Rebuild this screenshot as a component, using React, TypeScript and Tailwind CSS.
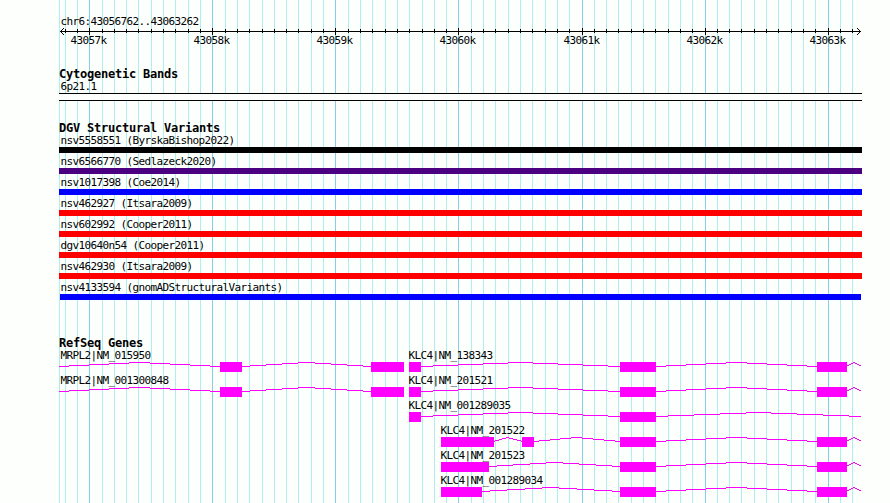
import React from 'react';

interface Variant {
  label: string;
  color: string;
  inset?: boolean;
}

interface Transcript {
  exons: [number, number][];
  start?: number; // intron running in from the left edge
  end?: number; // intron running out past the right edge
}

interface GeneRow {
  labels: { text: string; className: string }[];
  transcripts: Transcript[];
}

const MAJOR_LINES = [89, 212, 335, 458, 582, 705, 828];

const MINOR_LINES = [
  59, 65, 77, 102, 114, 126, 138, 151, 163, 175, 188, 200, 225, 237, 249, 262, 274, 286, 298, 311,
  323, 348, 360, 372, 385, 397, 409, 422, 434, 446, 471, 483, 495, 508, 520, 532, 545, 557, 569,
  594, 606, 618, 631, 643, 655, 668, 680, 692, 717, 729, 741, 754, 766, 778, 791, 803, 815, 840, 852,
];

const TICKS = [
  { text: '43057k', className: 'w-[123px]' },
  { text: '43058k', className: 'w-[123px]' },
  { text: '43059k', className: 'w-[123px]' },
  { text: '43060k', className: 'w-[124px]' },
  { text: '43061k', className: 'w-[123px]' },
  { text: '43062k', className: 'w-[123px]' },
  { text: '43063k', className: 'w-9' },
];

const VARIANTS: Variant[] = [
  { label: 'nsv5558551 (ByrskaBishop2022)', color: 'bg-black' },
  { label: 'nsv6566770 (Sedlazeck2020)', color: 'bg-[#4b0082]' },
  { label: 'nsv1017398 (Coe2014)', color: 'bg-[#0000ff]' },
  { label: 'nsv462927 (Itsara2009)', color: 'bg-[#ff0000]' },
  { label: 'nsv602992 (Cooper2011)', color: 'bg-[#ff0000]' },
  { label: 'dgv10640n54 (Cooper2011)', color: 'bg-[#ff0000]' },
  { label: 'nsv462930 (Itsara2009)', color: 'bg-[#ff0000]' },
  { label: 'nsv4133594 (gnomADStructuralVariants)', color: 'bg-[#0000ff]', inset: true },
];

const MRPL2: Transcript = { start: 59, exons: [[220, 242], [371, 404]] };

const GENES: GeneRow[] = [
  {
    labels: [
      { text: 'MRPL2|NM_015950', className: 'ml-[60px] w-[348px]' },
      { text: 'KLC4|NM_138343', className: '' },
    ],
    transcripts: [MRPL2, { exons: [[409, 421], [620, 656], [817, 847]], end: 861 }],
  },
  {
    labels: [
      { text: 'MRPL2|NM_001300848', className: 'ml-[60px] w-[348px]' },
      { text: 'KLC4|NM_201521', className: '' },
    ],
    transcripts: [MRPL2, { exons: [[409, 421], [620, 656], [817, 847]], end: 861 }],
  },
  {
    labels: [{ text: 'KLC4|NM_001289035', className: 'ml-[408px]' }],
    transcripts: [{ exons: [[409, 421], [620, 656]], end: 861 }],
  },
  {
    labels: [{ text: 'KLC4|NM_201522', className: 'ml-[440px]' }],
    transcripts: [{ exons: [[441, 494], [522, 534], [620, 656], [817, 847]], end: 861 }],
  },
  {
    labels: [{ text: 'KLC4|NM_201523', className: 'ml-[440px]' }],
    transcripts: [{ exons: [[441, 489], [620, 656], [817, 847]], end: 861 }],
  },
  {
    labels: [{ text: 'KLC4|NM_001289034', className: 'ml-[440px]' }],
    transcripts: [{ exons: [[441, 482], [620, 656], [817, 847]], end: 861 }],
  },
];

// Intron "hat": whole-pixel steps, four up to the middle and four back down
const hatPath = (from: number, to: number) => {
  const mid = Math.floor((from + to) / 2);
  let d = '';
  let runStart = from;
  let runY = 4;
  for (let x = from; x <= to; x++) {
    const t = x <= mid ? (x - from) / (mid - from) : (to - x) / (to - mid);
    const y = 4 - Math.round(t * 4);
    if (y !== runY) {
      d += `M${runStart} ${runY + 0.5}H${x}`;
      runStart = x;
      runY = y;
    }
  }
  return d + `M${runStart} ${runY + 0.5}H${to}`;
};

const intronPaths = ({ exons, start, end }: Transcript) => {
  const paths: string[] = [];
  if (start !== undefined) paths.push(hatPath(start, exons[0][0]));
  for (let i = 1; i < exons.length; i++) paths.push(hatPath(exons[i - 1][1] - 1, exons[i][0]));
  if (end !== undefined) paths.push(hatPath(exons[exons.length - 1][1] - 1, end));
  return paths;
};

const Label: React.FC<{ children: React.ReactNode }> = ({ children }) => (
  <span className="block w-max whitespace-pre pl-[0.5px] text-[11px] leading-[13px] tracking-[-0.6225px]">
    {children}
  </span>
);

const TrackTitle: React.FC<{ children: React.ReactNode }> = ({ children }) => (
  <h2 className="ml-[59px] h-3 whitespace-pre text-[12px] font-bold leading-[13px] tracking-[-0.224px]">
    {children}
  </h2>
);

const GridLines = () => (
  <svg className="absolute inset-0" width="890" height="503" shapeRendering="crispEdges">
    {MINOR_LINES.map((x) => (
      <rect key={x} x={x} y="0" width="1" height="503" fill="#afeeee" />
    ))}
    {MAJOR_LINES.map((x) => (
      <rect key={x} x={x} y="0" width="1" height="503" fill="#87ceeb" />
    ))}
  </svg>
);

const Ruler = () => (
  <svg className="block h-1.5 w-[890px] overflow-visible" shapeRendering="crispEdges">
    <rect x="60" y="3" width="801" height="1" />
    {MINOR_LINES.slice(1).map((x) => (
      <rect key={x} x={x} y="1" width="1" height="4" />
    ))}
    {MAJOR_LINES.map((x) => (
      <rect key={x} x={x} y="0" width="1" height="7" />
    ))}
    {[1, 2, 3].map((i) => (
      <g key={i}>
        <rect x={60 + i} y={3 - i} width="1" height="1" />
        <rect x={60 + i} y={3 + i} width="1" height="1" />
        <rect x={860 - i} y={3 - i} width="1" height="1" />
        <rect x={860 - i} y={3 + i} width="1" height="1" />
      </g>
    ))}
  </svg>
);

const App: React.FC = () => {
  return (
    <div className="relative h-[503px] w-[890px] overflow-hidden bg-[#fdfffd] font-['DejaVu_Sans_Mono',monospace] text-black">
      <GridLines />

      <main className="relative pt-[15px]">
        {/* Region and scale */}
        <section>
          <div className="ml-[60px] h-[13px]">
            <Label>chr6:43056762..43063262</Label>
          </div>
          <Ruler />
          <div className="ml-[70px] flex h-[13px]">
            {TICKS.map((tick) => (
              <div key={tick.text} className={`shrink-0 ${tick.className}`}>
                <Label>{tick.text}</Label>
              </div>
            ))}
          </div>
        </section>

        {/* Cytogenetic Bands */}
        <section className="mt-[21px]">
          <TrackTitle>Cytogenetic Bands</TrackTitle>
          <div className="ml-[60px] h-[13px]">
            <Label>6p21.1</Label>
          </div>
          <div className="ml-[59px] h-2 w-[803px] border-y border-black bg-[#fdfffd]" />
        </section>

        {/* Structural variants */}
        <section className="mt-[21px]">
          <TrackTitle>DGV Structural Variants</TrackTitle>
          {VARIANTS.map((variant) => (
            <div key={variant.label} className="h-[21px]">
              <div className="ml-[60px] h-[13px]">
                <Label>{variant.label}</Label>
              </div>
              <div
                className={`h-1.5 ${variant.inset ? 'ml-[60px] w-[801px]' : 'ml-[59px] w-[803px]'} ${variant.color}`}
              />
            </div>
          ))}
        </section>

        {/* Genes */}
        <section className="mt-[35px]">
          <TrackTitle>RefSeq Genes</TrackTitle>
          {GENES.map((row) => (
            <div key={row.labels[0].text} className="h-[25px]">
              <div className="flex h-[13px]">
                {row.labels.map((label) => (
                  <div key={label.text} className={label.className}>
                    <Label>{label.text}</Label>
                  </div>
                ))}
              </div>
              <svg className="block h-2.5 w-[890px]" shapeRendering="crispEdges">
                {row.transcripts.map((transcript, i) => (
                  <g key={i}>
                    {intronPaths(transcript).map((d) => (
                      <path key={d} d={d} stroke="#ff00ff" fill="none" />
                    ))}
                    {transcript.exons.map(([from, to]) => (
                      <rect key={from} x={from} y="0" width={to - from} height="10" fill="#ff00ff" />
                    ))}
                  </g>
                ))}
              </svg>
            </div>
          ))}
        </section>
      </main>
    </div>
  );
};

export default App;
